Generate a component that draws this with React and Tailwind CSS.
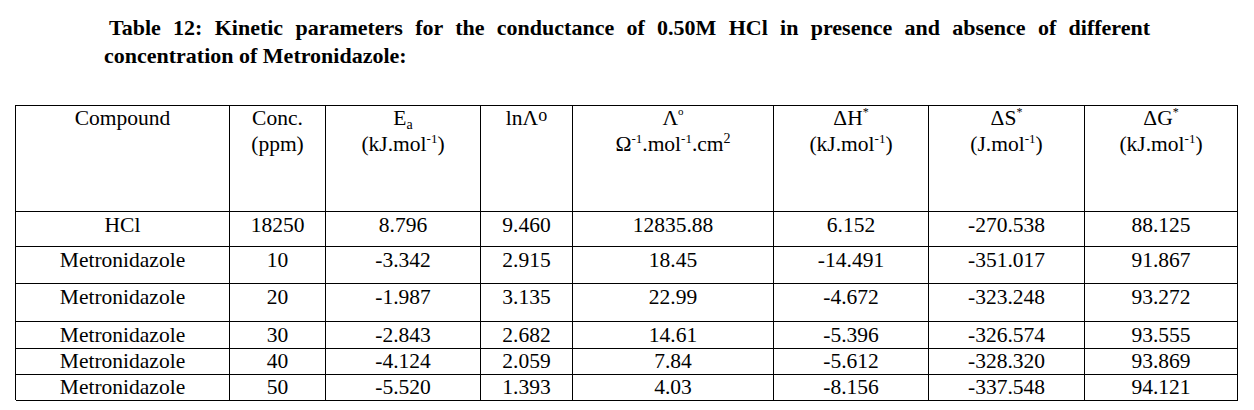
import React from 'react';

const cols = 'grid grid-cols-[214px_96px_155px_92px_201px_155px_156px_153px]';

const rows = [
  { h: 'h-[35px]', v: ['HCl', '18250', '8.796', '9.460', '12835.88', '6.152', '-270.538', '88.125'] },
  { h: 'h-[37px]', v: ['Metronidazole', '10', '-3.342', '2.915', '18.45', '-14.491', '-351.017', '91.867'] },
  { h: 'h-[38px]', v: ['Metronidazole', '20', '-1.987', '3.135', '22.99', '-4.672', '-323.248', '93.272'] },
  { h: 'h-[26px]', v: ['Metronidazole', '30', '-2.843', '2.682', '14.61', '-5.396', '-326.574', '93.555'] },
  { h: 'h-[26px]', v: ['Metronidazole', '40', '-4.124', '2.059', '7.84', '-5.612', '-328.320', '93.869'] },
  { h: 'h-[26px]', v: ['Metronidazole', '50', '-5.520', '1.393', '4.03', '-8.156', '-337.548', '94.121'] },
];

const Cell = ({ children }) => (
  <div className="border-r border-b border-black text-center leading-[26px]">{children}</div>
);

const Star = () => <sup className="text-[12px] -top-[9px]">*</sup>;
const Neg = () => <sup className="text-[13px] -top-[8px]">-1</sup>;

const App = () => {
  return (
    <div className="w-[1254px] h-[410px] bg-white text-black overflow-hidden font-['Liberation_Serif','Times_New_Roman',serif]">
      {/* caption */}
      <div className="ml-[104px] w-[1046px] pt-[14px] text-[22px] leading-[28px] font-bold">
        <div className="pl-[5px] text-justify [text-align-last:justify]">
          Table 12: Kinetic parameters for the conductance of 0.50M HCl in presence and absence of different
        </div>
        <div>concentration of Metronidazole:</div>
      </div>

      <div className="ml-[15px] mt-[35px] w-[1223px] border-l border-t border-black text-[21.5px]">
        <div className={`${cols} h-[106px]`}>
          <Cell><div className="-mt-[1px]">Compound</div></Cell>
          <Cell><div className="-mt-[1px]">Conc.<br />(ppm)</div></Cell>
          <Cell>
            <div className="-mt-[1px]">
              E<sub className="text-[14px]">a</sub><br />(kJ.mol<Neg />)
            </div>
          </Cell>
          <Cell>
            <div className="-mt-[1px]">
              lnΛ<span className="relative -top-[4px] text-[18px]">o</span>
            </div>
          </Cell>
          <Cell>
            <div className="-mt-[1px]">
              Λ<sup className="text-[11px] -top-[10px]">o</sup><br />
              Ω<Neg />.mol<Neg />.cm<sup className="text-[14px] -top-[8px]">2</sup>
            </div>
          </Cell>
          <Cell>
            <div className="-mt-[1px]">ΔH<Star /><br />(kJ.mol<Neg />)</div>
          </Cell>
          <Cell>
            <div className="-mt-[1px]">ΔS<Star /><br />(J.mol<Neg />)</div>
          </Cell>
          <Cell>
            <div className="-mt-[1px]">ΔG<Star /><br />(kJ.mol<Neg />)</div>
          </Cell>
        </div>

        {rows.map((r, i) => (
          <div key={i} className={`${cols} ${r.h}`}>
            {r.v.map((c, j) => (
              <Cell key={j}>{c}</Cell>
            ))}
          </div>
        ))}
      </div>
    </div>
  );
};

export default App;
